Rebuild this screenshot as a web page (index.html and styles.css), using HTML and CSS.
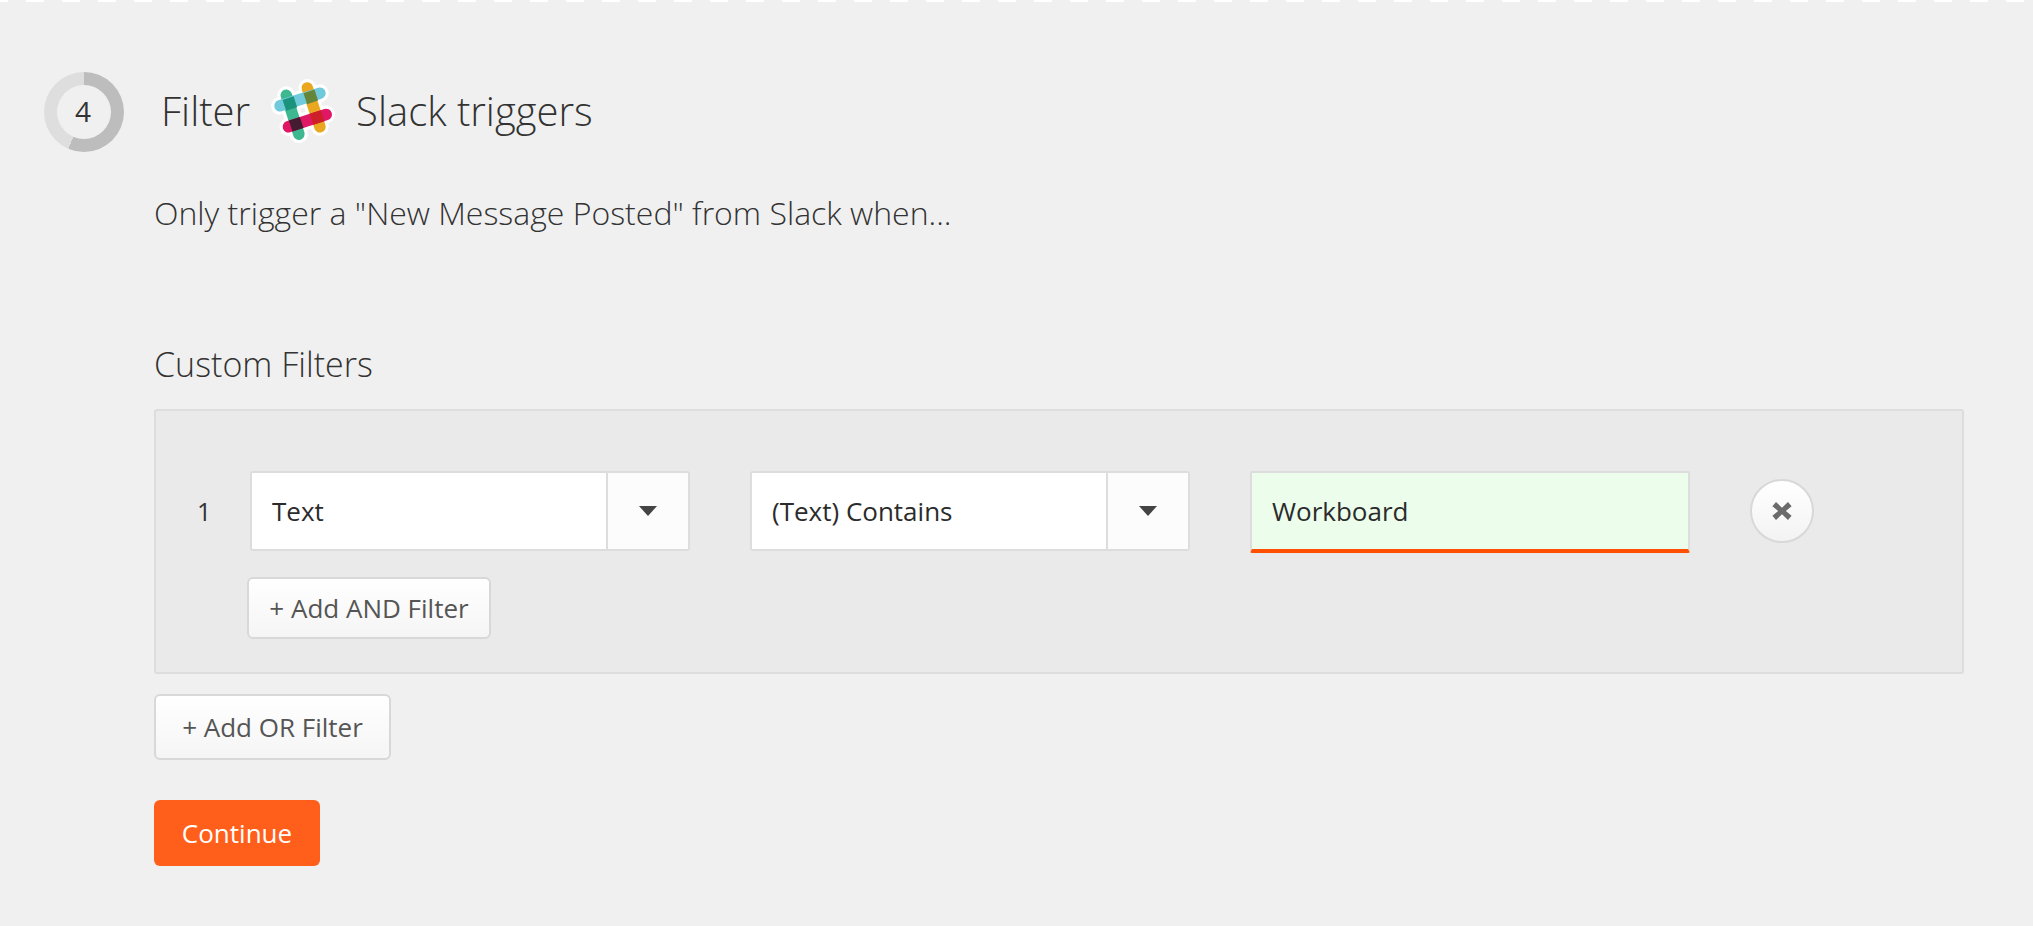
FILE: index.html
```html
<!DOCTYPE html>
<html lang="en">
<head>
<meta charset="utf-8">
<title>Filter Slack triggers</title>
<link rel="stylesheet" href="styles.css">
</head>
<body>
<div class="dash"></div>
<main class="step">
  <header class="step-head">
    <div class="ring"><div class="ring-inner">4</div></div>
    <h1 class="title">
      <span class="title-text">Filter</span>
      <svg class="slack" viewBox="0 0 80 80" aria-hidden="true">
        <g fill="none" stroke-linecap="round">
          <g stroke="#fff" stroke-width="17">
            <path d="M26 26L38 63M46 19L58 56M20 36L58 24M28 56L64 44.300"/>
          </g>
          <g stroke-width="11">
            <path stroke="#3eb890" d="M26 26L38 63"/>
            <path stroke="#e9a820" d="M46 19L58 56"/>
            <path stroke="#70cadb" d="M20 36L58 24"/>
            <path stroke="#e01765" d="M28 56L64 44.300"/>
          </g>
        </g>
        <rect x="-5.500" y="-5.500" width="11" height="11" fill="#1a937d" transform="translate(29.400 33.900) rotate(-18)"/>
        <rect x="-5.500" y="-5.500" width="11" height="11" fill="#65863a" transform="translate(49.300 27.500) rotate(-18)"/>
        <rect x="-5.500" y="-5.500" width="11" height="11" fill="#441c32" transform="translate(35.400 53.600) rotate(-18)"/>
        <rect x="-5.500" y="-5.500" width="11" height="11" fill="#cc1f27" transform="translate(55.300 47.100) rotate(-18)"/>
      </svg>
      <span class="title-text">Slack triggers</span>
    </h1>
  </header>
  <div class="content">
    <p class="lead">Only trigger a "New Message Posted" from Slack when...</p>
    <h2 class="sub">Custom Filters</h2>
    <section class="panel">
      <div class="row">
        <div class="num">1</div>
        <div class="select"><div class="value">Text</div><div class="arrow"><i class="caret"></i></div></div>
        <div class="select"><div class="value">(Text) Contains</div><div class="arrow"><i class="caret"></i></div></div>
        <div class="input">Workboard</div>
        <button class="close" type="button" aria-label="Remove">
          <svg viewBox="0 0 20 20" class="x"><path d="M5 2.500L10 7.200 15 2.500 18 6 13.200 10 18 14 15 17.500 10 12.800 5 17.500 2 14 6.800 10 2 6z"/></svg>
        </button>
      </div>
      <button class="btn and" type="button">+ Add AND Filter</button>
    </section>
    <button class="btn or" type="button">+ Add OR Filter</button>
    <button class="continue" type="button">Continue</button>
  </div>
</main>
</body>
</html>
```
FILE: styles.css
```css
* { box-sizing: border-box; }
html, body { margin: 0; height: 100%; }
body {
  background: #f0f0f0;
  color: #333;
  font-family: "Open Sans", "Liberation Sans", sans-serif;
  overflow: hidden;
}
.dash {
  height: 2px;
  background: linear-gradient(90deg, #fff 18px, transparent 18px) -10px 0 / 36px 2px repeat-x;
}
.step { padding: 70px 69px 0 44px; }
.step-head { display: flex; align-items: center; height: 80px; gap: 37px; }
.ring {
  width: 80px; height: 80px; border-radius: 50%;
  background: conic-gradient(#bdbdbd 0 203deg, #dedede 203deg 360deg);
  display: flex; align-items: center; justify-content: center;
}
.ring-inner {
  width: 54px; height: 54px; border-radius: 50%;
  background: #f0f0f0;
  display: flex; align-items: center; justify-content: center;
  padding: 0 2px 2px 0;
  font-size: 28px;
}
.title {
  margin: 0 0 2px; display: flex; align-items: center; gap: 18px;
  font-size: 40px; font-weight: 300; color: #333;
}
.title-text { padding-bottom: 1px; }
.slack { width: 84px; height: 84px; margin: 0 -5px 2px -9px; }
.content { padding-left: 110px; display: flex; flex-direction: column; align-items: flex-start; }
.lead { margin: 36px 0 0; font-size: 32px; font-weight: 300; line-height: 50px; }
.sub { margin: 101px 0 0; font-size: 34px; font-weight: 300; line-height: 50px; }
.panel {
  width: 1810px; height: 265px; margin-top: 20px;
  background: #eaeaea; border: 2px solid #ddd; border-radius: 3px;
  padding: 60px 0 0 93px;
}
.row { display: flex; align-items: flex-start; margin-left: 1px; }
.num { margin-left: -53px; width: 53px; font-size: 25px; line-height: 80px; }
.select {
  width: 440px; height: 80px; margin-right: 60px;
  display: flex; border: 2px solid #ddd; border-radius: 3px; background: #fff;
}
.value { flex: 1; padding-left: 20px; font-size: 26px; line-height: 76px; color: #2b2b2b; }
.arrow { width: 82px; border-left: 2px solid #ddd; background: #fcfcfc; display: flex; align-items: center; justify-content: center; }
.caret { width: 0; height: 0; border-left: 9px solid transparent; border-right: 9px solid transparent; border-top: 10px solid #444; }
.input {
  width: 440px; height: 82px; padding-left: 20px;
  background: #ecfdeb; border: 2px solid #ddd; border-bottom: 4px solid #ff4f00; border-radius: 2px;
  font-size: 26px; line-height: 76px; color: #2b2b2b;
}
.close {
  width: 64px; height: 64px; margin: 8px 0 0 60px; padding: 0;
  border: 2px solid #d8d8d8; border-radius: 50%;
  background: linear-gradient(#fff, #f3f3f3);
  display: flex; align-items: center; justify-content: center;
}
.x { width: 24px; height: 24px; fill: #6b6b6b; }
.btn {
  display: block; padding: 0;
  font-family: inherit; font-size: 26px; color: #555;
  background: linear-gradient(#fff, #f5f5f5);
  border: 2px solid #d8d8d8; border-radius: 6px;
}
.and { width: 244px; height: 62px; margin: 24px 0 0 -2px; }
.or { width: 237px; height: 66px; margin-top: 20px; }
.continue {
  width: 166px; height: 66px; margin-top: 40px; padding: 0;
  background: #ff5f1a; color: #fff; border: 0; border-radius: 6px;
  font-family: inherit; font-size: 26px;
}
```
